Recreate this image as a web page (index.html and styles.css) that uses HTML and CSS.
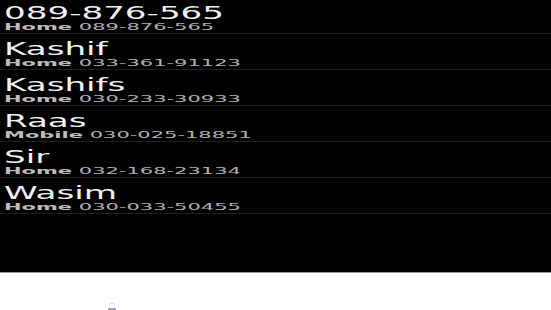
FILE: index.html
```html
<!DOCTYPE html>
<html lang="en">
<head>
    <meta charset="UTF-8">
    <meta name="viewport" content="width=device-width, initial-scale=1.0">
    <title>Contacts</title>
    <link rel="stylesheet" href="styles.css">
</head>
<body>
    <div class="screen">
        <ul class="contacts">
            <li class="contact">
                <span class="name">089-876-565</span>
                <span class="phone"><b>Home</b> 089-876-565</span>
            </li>
            <li class="contact">
                <span class="name">Kashif</span>
                <span class="phone"><b>Home</b> 033-361-91123</span>
            </li>
            <li class="contact">
                <span class="name">Kashifs</span>
                <span class="phone"><b>Home</b> 030-233-30933</span>
            </li>
            <li class="contact">
                <span class="name">Raas</span>
                <span class="phone"><b>Mobile</b> 030-025-18851</span>
            </li>
            <li class="contact">
                <span class="name">Sir</span>
                <span class="phone"><b>Home</b> 032-168-23134</span>
            </li>
            <li class="contact">
                <span class="name">Wasim</span>
                <span class="phone"><b>Home</b> 030-033-50455</span>
            </li>
        </ul>
    </div>
    <div class="bottom">
        <svg class="mark" width="10" height="9" viewBox="0 0 10 9">
            <path d="M2 5 A3 3 0 0 1 8 5" fill="none" stroke="#e8e2b0" stroke-width="1"/>
            <line x1="1" y1="8" x2="9" y2="8" stroke="#8a86b8" stroke-width="1.5"/>
        </svg>
    </div>
</body>
</html>
```

FILE: styles.css
```css
body {
    margin: 0;
    background: #fff;
    font-family: "DejaVu Sans", sans-serif;
}
.screen {
    height: 272px;
    background: #000;
    border-bottom: 1px solid #9c9c9c;
    overflow: hidden;
}
.contacts {
    list-style: none;
    margin: -2px 0 0 0;
    padding: 0;
}
.contact {
    height: 35px;
    padding-left: 4px;
    border-bottom: 1px solid #1e1e1e;
    overflow: hidden;
}
.name {
    display: block;
    width: max-content;
    padding-top: 7px;
    font-size: 17.5px;
    line-height: 17px;
    color: #f2f2f2;
    transform: scaleX(1.95);
    transform-origin: 0 0;
}
.phone {
    display: block;
    width: max-content;
    margin-top: 1px;
    font-size: 8.5px;
    line-height: 8px;
    color: #b0b0b0;
    transform: scaleX(2.47);
    transform-origin: 0 0;
}
.phone b {
    color: #bdbdbd;
}
.bottom {
    height: 37px;
    padding-left: 107px;
    display: flex;
    align-items: flex-end;
}
.mark {
    display: block;
}
```
